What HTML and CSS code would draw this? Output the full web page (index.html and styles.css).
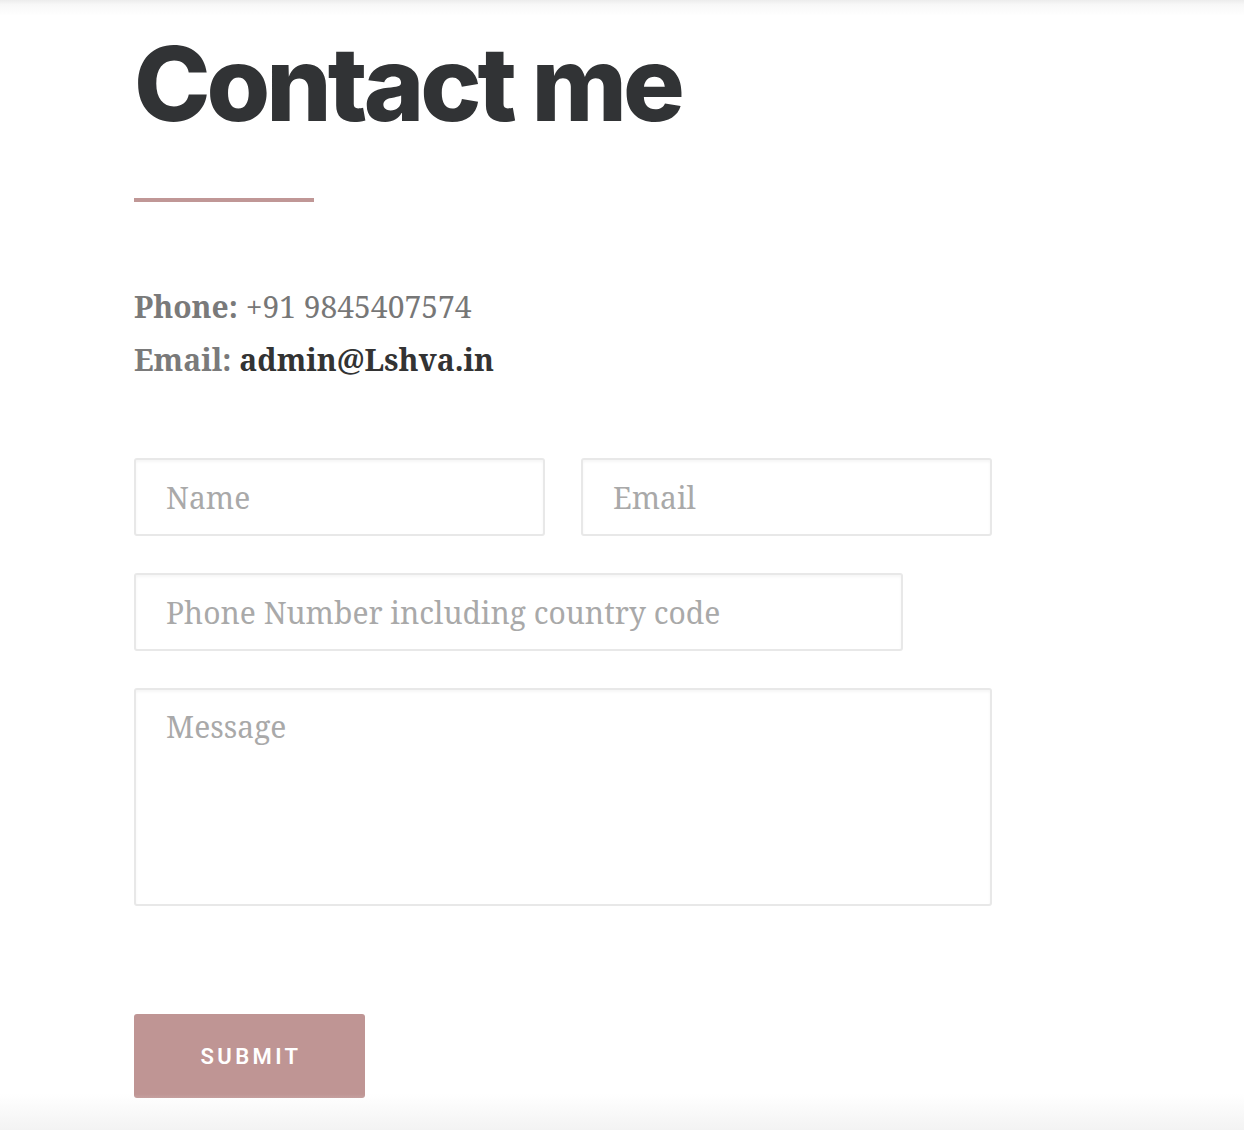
FILE: index.html
```html
<!DOCTYPE html>
<html>
<head>
<meta charset="utf-8">
<link rel="stylesheet" href="styles.css">
</head>
<body>
<div class="topshade"></div>
<main class="page">
  <h1 class="title">Contact me</h1>
  <div class="rule"></div>
  <div class="info">
    <p class="line"><b class="lbl">Phone:</b> +91 9845407574</p>
    <p class="line"><b class="lbl">Email:</b> <b class="val">admin@Lshva.in</b></p>
  </div>
  <form class="form">
    <div class="row">
      <input class="field half" type="text" placeholder="Name">
      <input class="field half" type="text" placeholder="Email">
    </div>
    <div class="row">
      <input class="field phone" type="text" placeholder="Phone Number including country code">
    </div>
    <div class="row">
      <textarea class="field msg" placeholder="Message"></textarea>
    </div>
    <button class="submit" type="button">SUBMIT</button>
  </form>
</main>
<div class="bottomshade"></div>
</body>
</html>
```
FILE: styles.css
```css
html, body {
  margin: 0;
  padding: 0;
  background: #fff;
  height: 1130px;
  overflow: hidden;
}
body {
  position: relative;
  font-family: "Noto Serif", "DejaVu Serif", serif;
}
.topshade {
  position: absolute;
  left: 0; right: 0; top: 0;
  height: 16px;
  background: linear-gradient(#ececec, #f8f8f8 30%, #fff);
}
.bottomshade {
  position: absolute;
  left: 0; right: 0; bottom: 0;
  height: 36px;
  background: linear-gradient(rgba(245,245,245,0), #f3f3f3);
  pointer-events: none;
}
.page {
  padding: 31px 0 0 134px;
}
.title {
  margin: 0;
  font-family: "Inter", "Open Sans", sans-serif;
  font-weight: 800;
  font-size: 103px;
  line-height: 106px;
  letter-spacing: -4px;
  color: #313335;
}
.rule {
  margin-top: 61px;
  width: 180px;
  height: 4px;
  background: #c09796;
}
.info {
  margin-top: 78px;
}
.line {
  margin: 0;
  font-size: 30px;
  line-height: 53px;
  color: #777;
}
.lbl { font-weight: 700; color: #7a7a7a; }
.val { font-weight: 700; color: #333; }
.form {
  margin-top: 72px;
}
.row {
  display: flex;
  gap: 36px;
  margin-bottom: 37px;
}
.field {
  box-sizing: border-box;
  border: 2px solid #e8e8e8;
  border-radius: 3px;
  box-shadow: inset 0 2px 3px rgba(0,0,0,0.04);
  background: #fff;
  font-family: "Noto Serif", "DejaVu Serif", serif;
  font-size: 30px;
  color: #555;
  padding: 0 30px;
  outline: none;
}
.field::placeholder { color: #a9a9a9; }
.half { width: 411px; height: 78px; }
.phone { width: 769px; height: 78px; }
.msg {
  width: 858px;
  height: 218px;
  padding-top: 16px;
  resize: none;
  display: block;
}
.submit {
  margin-top: 71px;
  width: 231px;
  height: 84px;
  border: none;
  border-radius: 3px;
  background: #bf9594;
  color: #fff;
  font-family: "Roboto", "Inter", sans-serif;
  font-weight: 600;
  font-size: 22px;
  letter-spacing: 3.4px;
  padding: 0 0 0 3px;
}
```
